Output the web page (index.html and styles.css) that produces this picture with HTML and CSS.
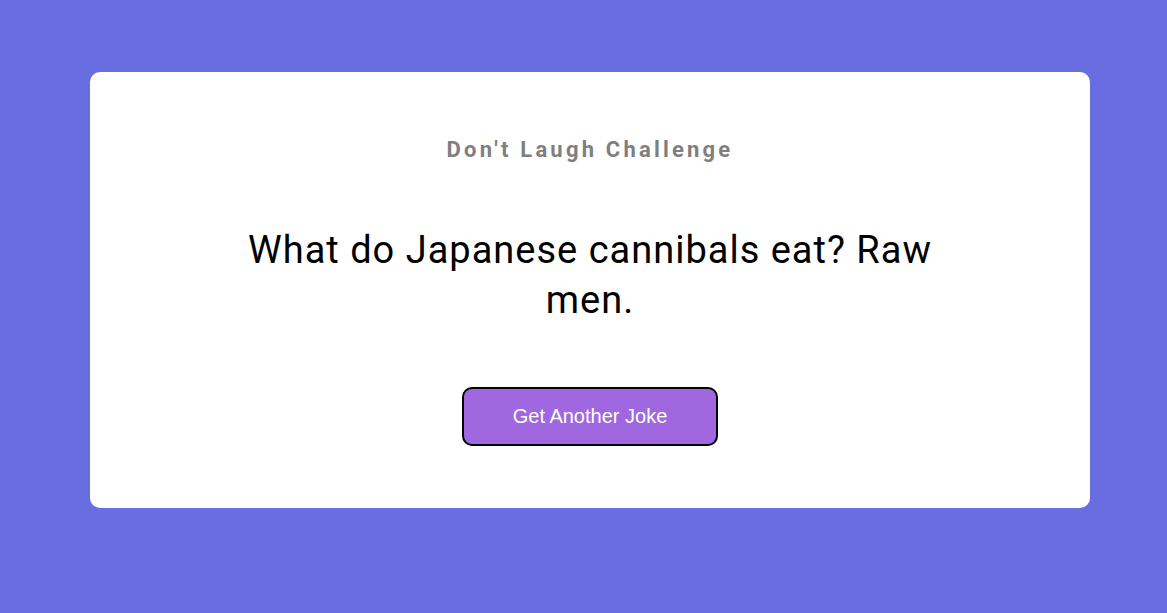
FILE: index.html
```html
<!DOCTYPE html>
<html>
<head>
<meta charset="utf-8">
<link rel="stylesheet" href="styles.css">
</head>
<body>
<div class="page">
  <div class="card">
    <h3 class="title">Don't Laugh Challenge</h3>
    <div class="joke">What do Japanese cannibals eat? Raw men.</div>
    <button class="btn">Get Another Joke</button>
  </div>
</div>
</body>
</html>
```
FILE: styles.css
```css
* { box-sizing: border-box; }
html, body { margin: 0; padding: 0; }
body {
  background: #686de0;
  font-family: Roboto, "Noto Sans", sans-serif;
  height: 613px;
  overflow: hidden;
}
.page {
  padding: 72px 77px 0 90px;
}
.card {
  background: #ffffff;
  border-radius: 10px;
  width: 1000px;
  height: 436px;
  padding: 63px 20px 0;
  display: flex;
  flex-direction: column;
  align-items: center;
}
.title {
  margin: 0;
  font-size: 22px;
  font-weight: 700;
  letter-spacing: 3.2px;
  color: #7f7f7f;
  line-height: 30px;
}
.joke {
  margin-top: 60px;
  max-width: 720px;
  text-align: center;
  font-size: 38px;
  line-height: 50px;
  letter-spacing: 1px;
  color: #000;
}
.btn {
  margin-top: 62px;
  width: 256px;
  height: 59px;
  background: #9f68e0;
  border: 2px solid #000;
  border-radius: 10px;
  color: #fff;
  font-family: "Liberation Sans", Arial, sans-serif;
  font-size: 20px;
}
```
